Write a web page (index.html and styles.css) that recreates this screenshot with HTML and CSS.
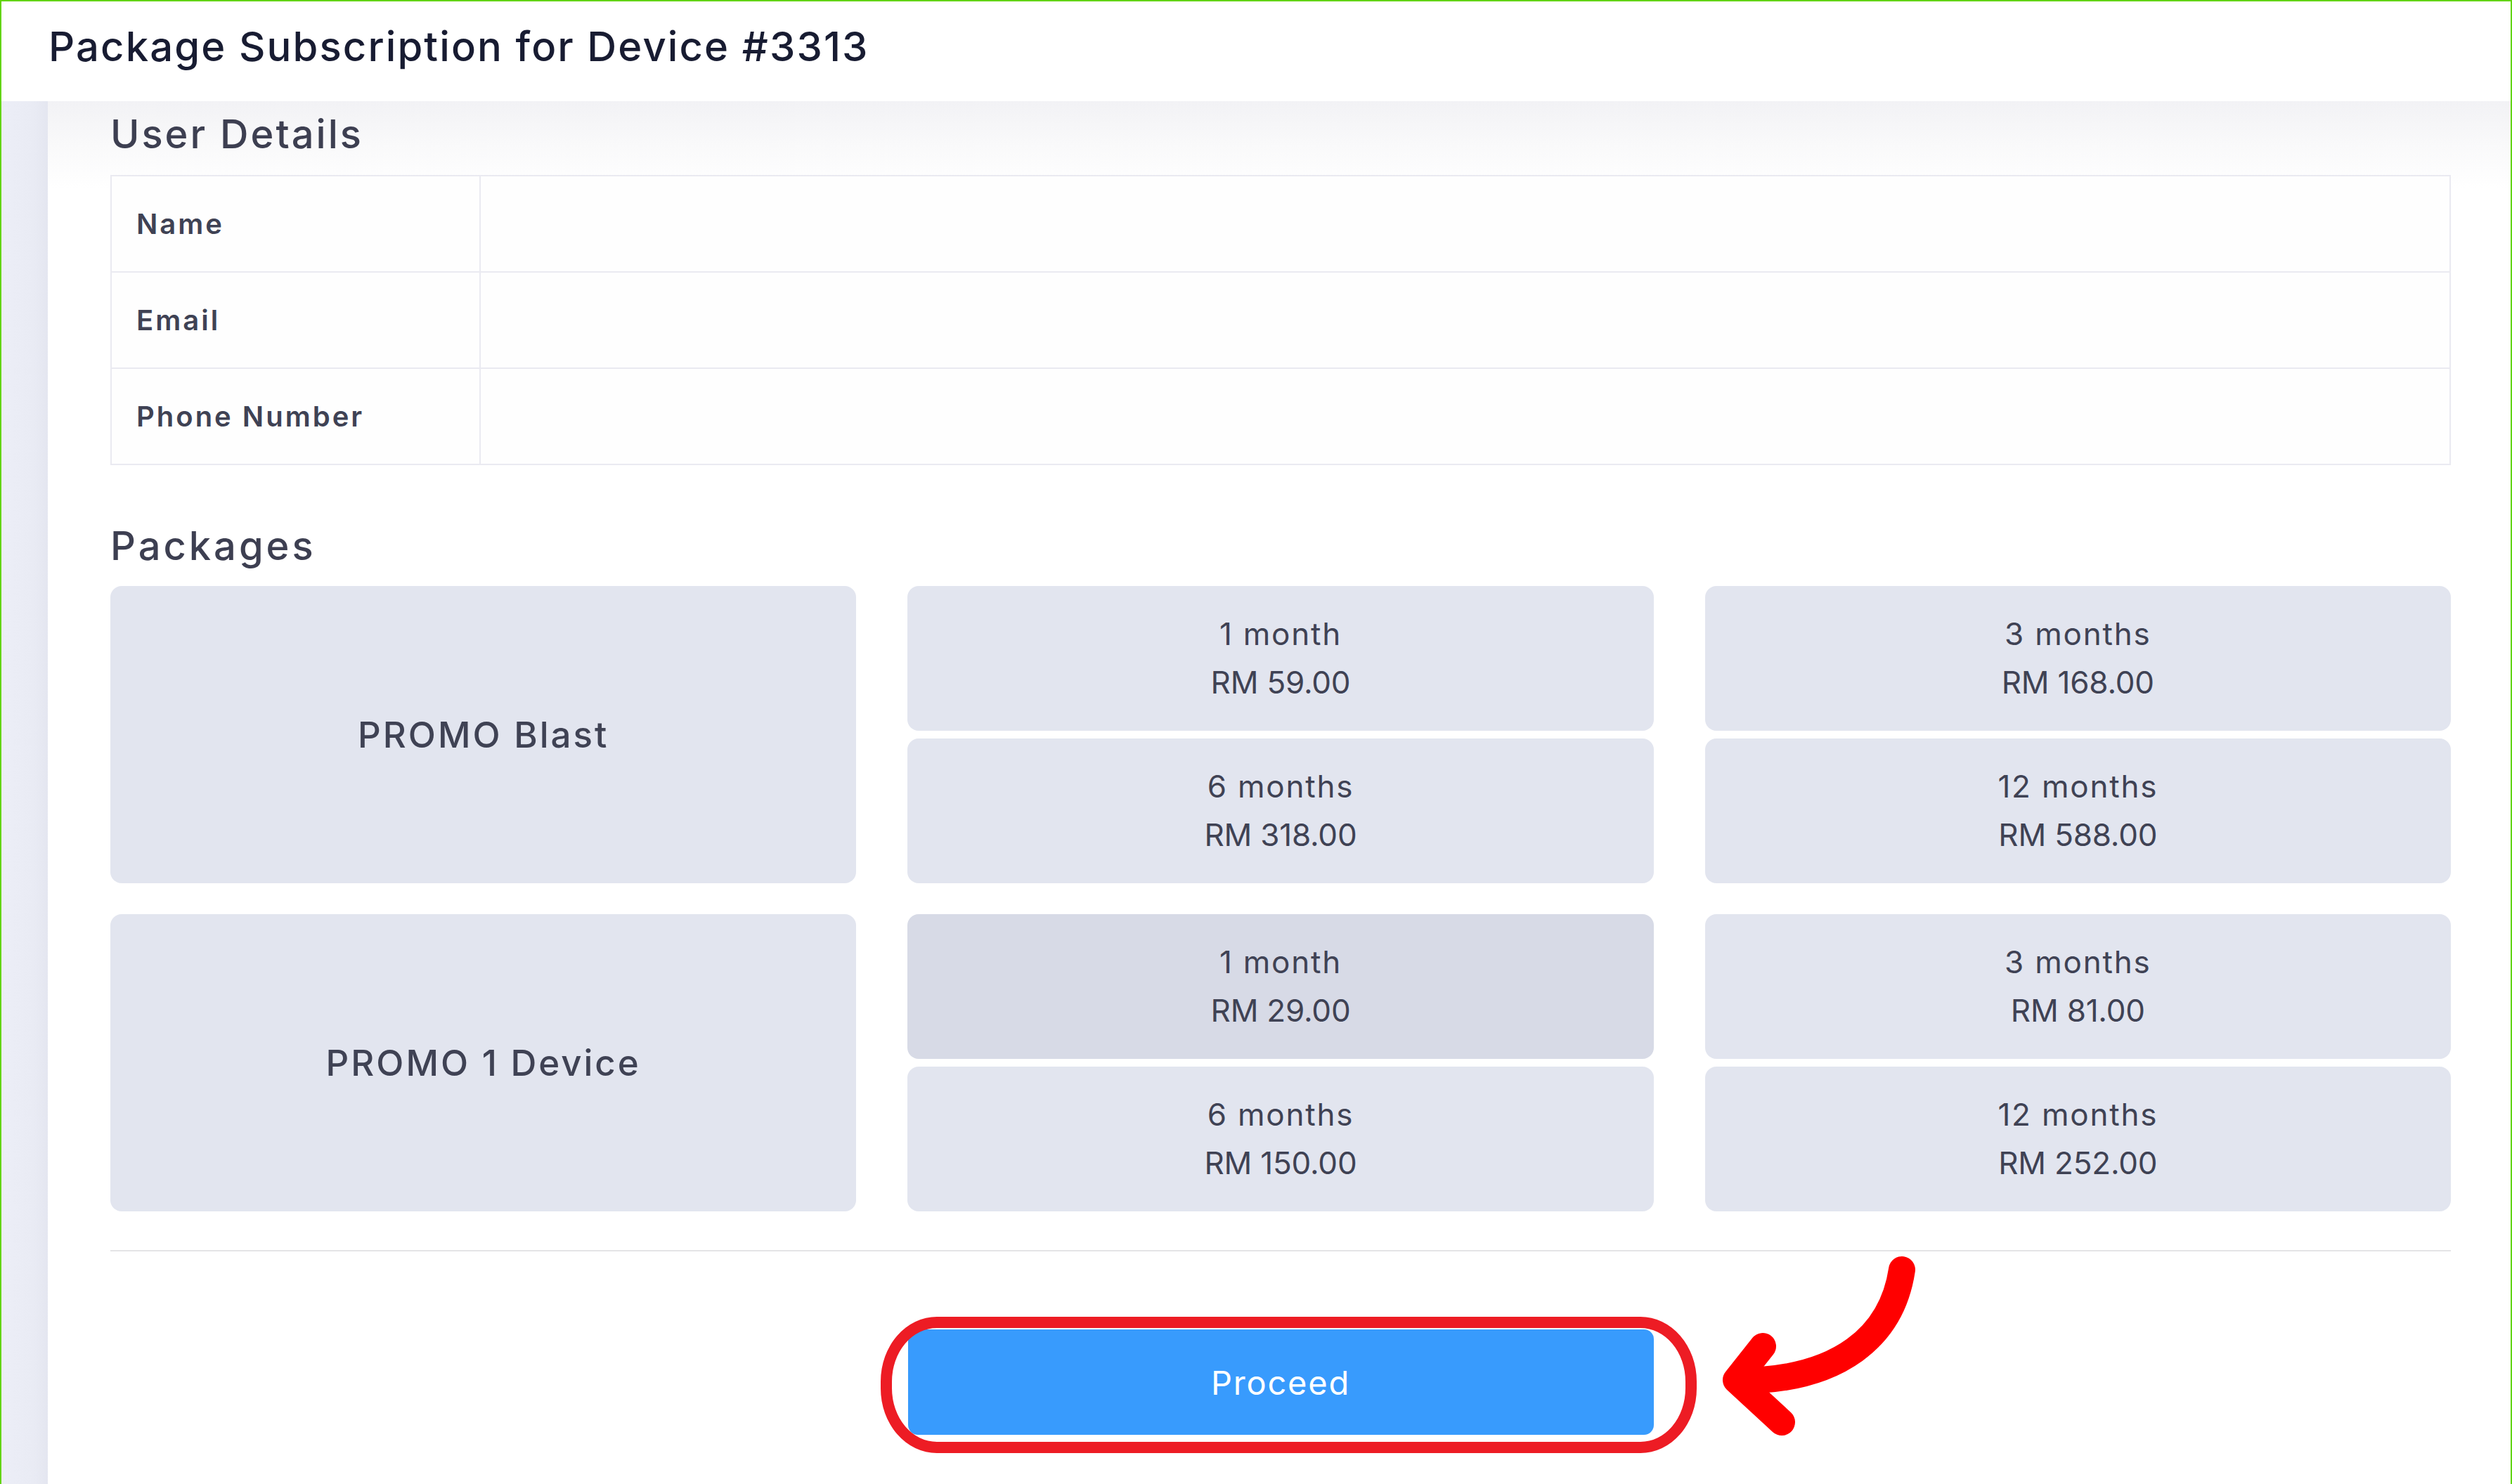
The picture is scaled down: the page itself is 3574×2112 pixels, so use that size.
FILE: index.html
```html
<!DOCTYPE html>
<html lang="en">
<head>
<meta charset="utf-8">
<title>Package Subscription for Device #3313</title>
<link rel="stylesheet" href="styles.css">
</head>
<body>
<div class="frame">
  <header class="topbar">
    <h1 class="page-title">Package Subscription for Device #3313</h1>
  </header>
  <div class="layout">
    <aside class="rail"></aside>
    <main class="content">
      <h2 class="section-title">User Details</h2>
      <div class="details">
        <div class="detail-row"><div class="detail-label">Name</div><div class="detail-value"></div></div>
        <div class="detail-row"><div class="detail-label">Email</div><div class="detail-value"></div></div>
        <div class="detail-row"><div class="detail-label">Phone Number</div><div class="detail-value"></div></div>
      </div>

      <h2 class="section-title packages-title">Packages</h2>
      <div class="packages">
        <div class="package">
          <div class="package-name">PROMO Blast</div>
          <div class="option"><span class="term">1 month</span><span class="price">RM 59.00</span></div>
          <div class="option"><span class="term">3 months</span><span class="price">RM 168.00</span></div>
          <div class="option"><span class="term">6 months</span><span class="price">RM 318.00</span></div>
          <div class="option"><span class="term">12 months</span><span class="price">RM 588.00</span></div>
        </div>
        <div class="package">
          <div class="package-name">PROMO 1 Device</div>
          <div class="option option-selected"><span class="term">1 month</span><span class="price">RM 29.00</span></div>
          <div class="option"><span class="term">3 months</span><span class="price">RM 81.00</span></div>
          <div class="option"><span class="term">6 months</span><span class="price">RM 150.00</span></div>
          <div class="option"><span class="term">12 months</span><span class="price">RM 252.00</span></div>
        </div>
      </div>

      <hr class="divider">

      <div class="actions">
        <div class="proceed-wrap">
          <button class="proceed" type="button">Proceed</button>
          <span class="highlight-ring"></span>
          <svg class="pointer-arrow" width="350" height="350" viewBox="0 0 350 350" aria-hidden="true">
            <path d="M286 48 C272 142 198 206 54 206" fill="none" stroke="#ff0000" stroke-width="38" stroke-linecap="round"/>
            <path d="M88 157 L50 205 L115 265" fill="none" stroke="#ff0000" stroke-width="38" stroke-linecap="round" stroke-linejoin="round"/>
          </svg>
        </div>
      </div>
    </main>
  </div>
</div>
</body>
</html>
```

FILE: styles.css
```css
* {
  box-sizing: border-box;
}

html, body {
  margin: 0;
  padding: 0;
  height: 100%;
  overflow: hidden;
  background: #ffffff;
}

body {
  font-family: "Inter", "Noto Sans", "Liberation Sans", sans-serif;
  color: #3f4254;
}

.frame {
  height: 2112px;
  border: 2px solid #62d40a;
  border-bottom: none;
  display: flex;
  flex-direction: column;
}

.topbar {
  height: 142px;
  flex: 0 0 142px;
  background: #ffffff;
  padding: 0 0 0 67px;
  display: flex;
  align-items: flex-start;
  position: relative;
  z-index: 2;
}

.page-title {
  margin: 0;
  padding-top: 29px;
  font-size: 58px;
  line-height: 70px;
  font-weight: 500;
  color: #181c32;
  letter-spacing: 2.1px;
}

.layout {
  flex: 1;
  display: flex;
  min-height: 0;
}

.rail {
  width: 66px;
  flex: 0 0 66px;
  background: linear-gradient(90deg, #eceef7 0%, #e9ebf4 70%, #e4e6f0 100%);
}

.content {
  flex: 1;
  padding: 14px 85px 0 89px;
  background: linear-gradient(180deg, #f2f2f5 0px, #f9f9fa 60px, #ffffff 125px);
}

.section-title {
  margin: 0;
  font-size: 56px;
  line-height: 67px;
  font-weight: 500;
  color: #3d3f51;
  letter-spacing: 3px;
}

.details {
  margin-top: 24px;
  border: 2px solid #eaeaf1;
  background: #fefefe;
}

.detail-row {
  display: grid;
  grid-template-columns: 525px 1fr;
  height: 137px;
  border-top: 2px solid #eaeaf1;
}

.detail-row:first-child {
  border-top: none;
  height: 135px;
}

.detail-label {
  display: flex;
  align-items: center;
  padding-left: 35px;
  font-size: 40px;
  font-weight: 600;
  color: #3f4254;
  letter-spacing: 3px;
  border-right: 2px solid #eaeaf1;
}

.packages-title {
  margin-top: 82px;
  letter-spacing: 4px;
}

.packages {
  margin-top: 23px;
  display: flex;
  flex-direction: column;
  gap: 44px;
}

.package {
  display: grid;
  grid-template-columns: repeat(3, 1fr);
  grid-template-rows: 206px 206px;
  column-gap: 73px;
  row-gap: 11px;
}

.package-name {
  grid-row: 1 / span 2;
  grid-column: 1;
  display: flex;
  align-items: center;
  justify-content: center;
  background: #e2e5ef;
  border-radius: 16px;
  font-size: 51px;
  font-weight: 500;
  letter-spacing: 3px;
  color: #3f4254;
}

.option {
  display: flex;
  flex-direction: column;
  align-items: center;
  justify-content: center;
  background: #e2e5ef;
  border-radius: 16px;
  font-size: 44px;
  line-height: 69px;
  font-weight: 400;
  color: #3f4254;
}

.term {
  letter-spacing: 1.8px;
}

.price {
  letter-spacing: -0.2px;
}

.option-selected {
  background: #d7dae6;
}

.divider {
  margin: 55px 0 0 0;
  border: none;
  border-top: 2px solid #e4e4e6;
  height: 0;
}

.actions {
  margin-top: 111px;
  display: flex;
  justify-content: center;
}

.proceed-wrap {
  position: relative;
  width: 1061px;
}

.proceed {
  display: block;
  width: 100%;
  height: 150px;
  border: none;
  border-radius: 14px;
  background: #389bfd;
  color: #ffffff;
  font-family: "Inter", "Noto Sans", "Liberation Sans", sans-serif;
  font-size: 47px;
  font-weight: 400;
  letter-spacing: 1.8px;
  cursor: pointer;
}

.highlight-ring {
  position: absolute;
  left: -39px;
  top: -18px;
  width: 1161px;
  height: 194px;
  border: 16px solid #ed1c24;
  border-radius: 80px / 92px;
  pointer-events: none;
}

.pointer-arrow {
  position: absolute;
  left: 1128px;
  top: -133px;
  overflow: visible;
  pointer-events: none;
}
```
